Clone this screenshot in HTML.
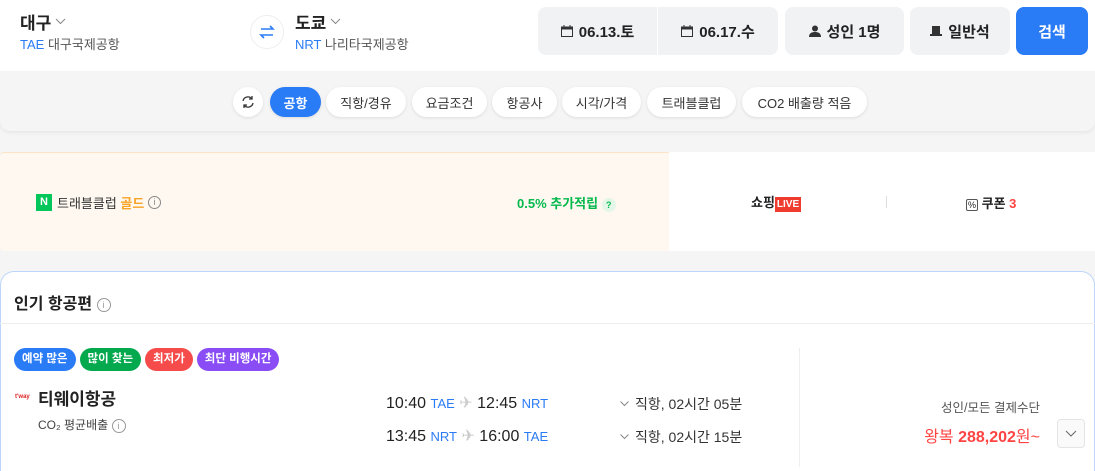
<!DOCTYPE html>
<html><head><meta charset="utf-8"><style>
*{margin:0;padding:0;box-sizing:border-box}
body{width:1095px;height:467px;overflow:hidden;background:#f5f5f5;font-family:"Liberation Sans","Noto Sans CJK KR",sans-serif;color:#222;position:relative}
.abs{position:absolute}
.hdr{left:0;top:0;width:1095px;height:71px;background:#fff}
.city{font-size:17px;font-weight:bold;color:#222;display:flex;align-items:center;gap:4px}
.sub{font-size:13px;color:#555}
.sub b{font-weight:normal;color:#2a7bf6}
.box{background:#f1f2f4;border-radius:8px;top:7px;height:48px;display:flex;align-items:center;justify-content:center;gap:6px;font-size:15px;font-weight:bold;color:#222}
.filt{left:0;top:71px;width:1095px;height:60px;background:#f5f5f5;border-radius:0 0 10px 10px;box-shadow:0 2px 3px rgba(0,0,0,.06)}
.chip{position:absolute;top:87px;height:30px;border-radius:15px;background:#fff;font-size:13px;color:#333;display:flex;align-items:center;justify-content:center;box-shadow:0 1px 3px rgba(0,0,0,.1)}
.tag{display:inline-block;height:23px;line-height:23px;border-radius:12px;color:#fff;font-size:11.5px;font-weight:bold;padding:0 8px;margin-right:4px}
.t1{font-size:16px;color:#222}
.ap{font-size:13px;color:#2a7bf6}
.dur{font-size:14px;color:#333;display:flex;align-items:center;gap:6px}
</style></head><body>
<div class="abs hdr"></div>
<div class="abs city" style="left:20px;top:9px">대구 <svg width="11" height="7"><path d="M1 1l4.5 4.5L10 1" stroke="#888" fill="none"/></svg></div>
<div class="abs sub" style="left:20px;top:34px"><b>TAE</b> 대구국제공항</div>
<div class="abs" style="left:250px;top:15px;width:34px;height:34px;border-radius:50%;border:1px solid #eee;background:#fff"><svg width="32" height="32"><path d="M10 13h12l-3-3M22 19H10l3 3" stroke="#2a7bf6" stroke-width="1.6" fill="none"/></svg></div>
<div class="abs city" style="left:295px;top:9px">도쿄 <svg width="11" height="7"><path d="M1 1l4.5 4.5L10 1" stroke="#888" fill="none"/></svg></div>
<div class="abs sub" style="left:295px;top:34px"><b>NRT</b> 나리타국제공항</div>
<div class="abs box" style="left:538px;width:119px;border-radius:8px 0 0 8px"><svg width="12" height="12"><rect x="0.5" y="2" width="11" height="9.5" fill="none" stroke="#333"/><rect x="0.5" y="2" width="11" height="2.5" fill="#333"/><path d="M3 0v3M9 0v3" stroke="#333"/></svg>06.13.토</div>
<div class="abs box" style="left:658px;width:120px;border-radius:0 8px 8px 0"><svg width="12" height="12"><rect x="0.5" y="2" width="11" height="9.5" fill="none" stroke="#333"/><rect x="0.5" y="2" width="11" height="2.5" fill="#333"/><path d="M3 0v3M9 0v3" stroke="#333"/></svg>06.17.수</div>
<div class="abs box" style="left:785px;width:119px"><svg width="12" height="12"><circle cx="6" cy="3.5" r="3" fill="#333"/><path d="M0 12c0-4 3-5 6-5s6 1 6 5z" fill="#333"/></svg>성인 1명</div>
<div class="abs box" style="left:910px;width:100px"><svg width="12" height="12"><rect x="2" y="1" width="8" height="8" fill="#333"/><rect x="0" y="9" width="12" height="2" fill="#333"/></svg>일반석</div>
<div class="abs box" style="left:1016px;width:72px;background:#2a7bf6;color:#fff">검색</div>
<div class="abs filt"></div>
<div class="chip" style="left:233px;width:30px"><svg width="16" height="16"><path d="M3 7a5 5 0 0 1 9-2M13 9a5 5 0 0 1-9 2M12 2v3h-3M4 14v-3h3" stroke="#333" fill="none" stroke-width="1.3"/></svg></div>
<div class="chip" style="left:270px;width:51px;background:#2a7bf6;color:#fff;font-weight:bold">공항</div>
<div class="chip" style="left:326px;width:80px">직항/경유</div>
<div class="chip" style="left:412px;width:75px">요금조건</div>
<div class="chip" style="left:492px;width:65px">항공사</div>
<div class="chip" style="left:562px;width:79px">시각/가격</div>
<div class="chip" style="left:647px;width:89px">트래블클럽</div>
<div class="chip" style="left:742px;width:125px">CO2 배출량 적음</div>
<div class="abs" style="left:0;top:152px;width:669px;height:99px;background:#fff8f0;border-top:1px solid #fde3c8;border-radius:4px 0 0 4px"></div>
<div class="abs" style="left:669px;top:152px;width:426px;height:99px;background:#fff"></div>
<div class="abs" style="left:36px;top:193px;font-size:13px;color:#333;display:flex;align-items:center"><span style="background:#03c75a;color:#fff;font-weight:bold;font-size:11px;width:16px;height:17px;text-align:center;line-height:17px;margin-right:5px">N</span>트래블클럽&nbsp;<b style="color:#f7a325">골드</b>&nbsp;<span style="display:inline-block;width:13px;height:13px;border:1px solid #888;border-radius:50%;font-size:9px;text-align:center;line-height:11px;color:#888">i</span></div>
<div class="abs" style="left:517px;top:193px;font-size:13px;color:#03b94c;font-weight:bold">0.5% 추가적립 <span style="display:inline-block;width:14px;height:14px;border-radius:50%;background:#e4f6e8;font-size:9px;text-align:center;line-height:14px">?</span></div>
<div class="abs" style="left:751px;top:192px;font-size:13px;font-weight:bold">쇼핑<span style="background:#f03c2e;color:#fff;font-size:10px;padding:2px 2px">LIVE</span></div>
<div class="abs" style="left:886px;top:196px;width:1px;height:12px;background:#ddd"></div>
<div class="abs" style="left:966px;top:193px;font-size:13px;font-weight:bold"><span style="font-size:9px;border:1px solid #555;border-radius:2px;padding:0 1px;font-weight:normal">%</span> 쿠폰 <span style="color:#f44">3</span></div>
<div class="abs" style="left:0;top:271px;width:1095px;height:200px;background:#fff;border:1px solid #bcd6fb;border-bottom:none;border-radius:14px 14px 0 0"></div>
<div class="abs" style="left:14px;top:290px;font-size:16px;font-weight:bold">인기 항공편 <span style="display:inline-block;width:14px;height:14px;border:1px solid #999;border-radius:50%;font-size:9px;text-align:center;line-height:12px;color:#999;font-weight:normal;vertical-align:1px">i</span></div>
<div class="abs" style="left:0;top:323px;width:1095px;height:1px;background:#eee"></div>
<div class="abs" style="left:14px;top:348px;white-space:nowrap"><span class="tag" style="background:#2a7bf6">예약 많은</span><span class="tag" style="background:#04a94e">많이 찾는</span><span class="tag" style="background:#f64b4b">최저가</span><span class="tag" style="background:#8a4cf5">최단 비행시간</span></div>
<div class="abs" style="left:15px;top:394px;font-size:6px;color:#d22;font-weight:bold">t'way</div>
<div class="abs" style="left:38px;top:385px;font-size:17px;font-weight:bold">티웨이항공</div>
<div class="abs" style="left:38px;top:416px;font-size:12px;color:#444">CO₂ 평균배출 <span style="display:inline-block;width:14px;height:14px;border:1px solid #999;border-radius:50%;font-size:9px;text-align:center;line-height:12px;color:#999">i</span></div>
<div class="abs" style="left:386px;top:393px"><span class="t1">10:40</span> <span class="ap">TAE</span> <span style="color:#ccc">✈</span> <span class="t1">12:45</span> <span class="ap">NRT</span></div>
<div class="abs" style="left:386px;top:426px"><span class="t1">13:45</span> <span class="ap">NRT</span> <span style="color:#ccc">✈</span> <span class="t1">16:00</span> <span class="ap">TAE</span></div>
<div class="abs dur" style="left:620px;top:394px"><svg width="9" height="6"><path d="M.5 .5l4 4 4-4" stroke="#888" fill="none"/></svg>직항, 02시간 05분</div>
<div class="abs dur" style="left:620px;top:427px"><svg width="9" height="6"><path d="M.5 .5l4 4 4-4" stroke="#888" fill="none"/></svg>직항, 02시간 15분</div>
<div class="abs" style="left:799px;top:348px;width:1px;height:119px;background:#eee"></div>
<div class="abs" style="left:880px;top:397px;width:160px;text-align:right;font-size:12.5px;color:#555">성인/모든 결제수단</div>
<div class="abs" style="left:880px;top:423px;width:160px;text-align:right;font-size:16px;color:#f44">왕복 <b>288,202</b>원~</div>
<div class="abs" style="left:1057px;top:419px;width:28px;height:29px;border:1px solid #e4e4e4;border-radius:4px;background:#fafafa"><svg width="26" height="27"><path d="M8 11l5 5 5-5" stroke="#666" fill="none"/></svg></div>
</body></html>
